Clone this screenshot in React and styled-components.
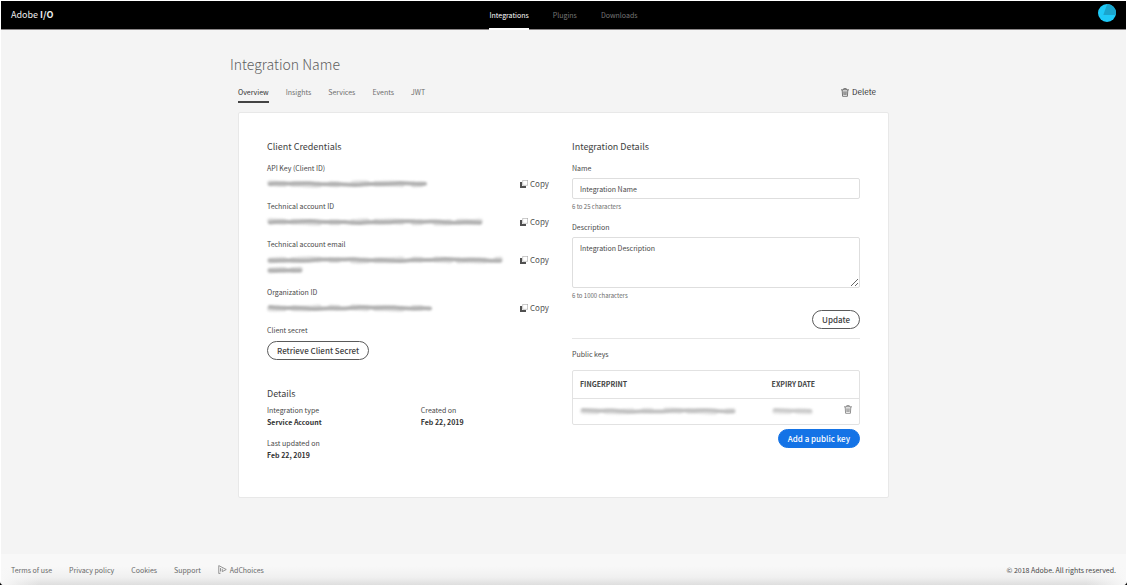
import React from "react";
import styled, { createGlobalStyle, css } from "styled-components";

const GlobalStyle = createGlobalStyle`
  *, *::before, *::after { box-sizing: border-box; }
  html { background: #000; }
  body {
    margin: 0;
    color: #484848;
    font-family: "Noto Sans CJK SC", "Open Sans", sans-serif;
    font-size: 7px;
    line-height: 12px;
  }
  button, input, textarea { font: inherit; color: inherit; margin: 0; }
  a { color: inherit; text-decoration: none; }
  h1, h2, p, dl, dd { margin: 0; font-weight: inherit; }
`;

const Page = styled.div`
  display: flex;
  flex-direction: column;
  min-height: 100vh;
  background: #f4f4f4;
  border: 1px solid #fff;
  border-bottom: 0;
  border-radius: 0 0 4px 4px;
  overflow: hidden;
`;

const TopBar = styled.header`
  display: grid;
  grid-template-columns: 1fr auto 1fr;
  align-items: center;
  height: 29px;
  padding: 0 10px;
  background: #000;
  border-bottom: 1px solid #8a8687;
`;

const Brand = styled.a`
  color: #eee;
  font-size: 9px;
  justify-self: start;
`;

const TopNav = styled.nav`
  display: flex;
  align-self: stretch;
  gap: 24px;
`;

const TopLink = styled.a`
  display: flex;
  align-items: center;
  padding-bottom: 1px;
  color: ${(p) => (p.$active ? "#fff" : "#777")};
  box-shadow: ${(p) => (p.$active ? "inset 0 -1px 0 #fff, 0 1px 0 #fff" : "none")};
`;

const AvatarButton = styled.button`
  justify-self: end;
  align-self: start;
  display: flex;
  margin-top: 3px;
  padding: 0;
  border: 0;
  background: none;
`;

const Main = styled.main`
  width: 100%;
  max-width: 667px;
  margin: 0 auto;
  padding: 22px 0 56px;
`;

const Title = styled.h1`
  color: #606060;
  font-size: 14px;
  line-height: 24px;
  font-weight: 300;
`;

const TabRow = styled.div`
  display: flex;
  align-items: flex-start;
  justify-content: space-between;
  margin: 10px 8px 0;
  padding-right: 13px;
`;

const Tabs = styled.nav`
  display: flex;
  gap: 17px;
`;

const Tab = styled.a`
  padding-bottom: 3px;
  border-bottom: 2px solid ${(p) => (p.$active ? "#444" : "transparent")};
  color: ${(p) => (p.$active ? "#333" : "#6e6e6e")};
`;

const PlainButton = styled.button`
  display: inline-flex;
  align-items: center;
  gap: ${(p) => (p.$strong ? 3 : 2)}px;
  padding: 0;
  border: 0;
  background: none;
  color: ${(p) => (p.$strong ? "#333" : "#555")};
  font-size: 8px;
  line-height: 12px;
`;

const Card = styled.section`
  display: grid;
  grid-template-columns: 1fr 288px;
  gap: 23px;
  margin: 9px 8px 0;
  padding: 26px 28px 36px;
  background: #fff;
  border: 1px solid #e8e8e8;
  border-radius: 2px;
`;

const Column = styled.div`
  min-width: 0;
`;

const Heading = styled.h2`
  margin-top: ${(p) => (p.$spaced ? 26 : 0)}px;
  margin-bottom: ${(p) => (p.$spaced ? 2 : 7)}px;
  color: #404040;
  font-size: 9px;
  line-height: 16px;
`;

const Credential = styled.div`
  margin-bottom: 10px;
`;

const CredentialValue = styled.div`
  display: flex;
  align-items: flex-start;
  justify-content: space-between;
  margin-top: 4px;
`;

const Lines = styled.div`
  display: flex;
  flex-direction: column;
  height: ${(p) => (p.$count > 1 ? 22 : 12)}px;

  svg + svg { margin-top: -2px; }
`;

const SmearSvg = styled.svg`
  display: block;
  flex: none;
  overflow: visible;
  filter: blur(1px);
`;

const PillButton = styled.button`
  height: 19px;
  padding: 0 9px;
  border: 1px solid #5a5a5a;
  border-radius: 10px;
  background: #fff;
  color: #404040;
  font-size: 8px;
  line-height: 12px;
  font-weight: 500;
  ${(p) =>
    p.$primary &&
    css`
      border-color: #1473e6;
      background: #1473e6;
      color: #fff;
    `}
`;

const SecretAction = styled.div`
  padding-top: 5px;
`;

const Facts = styled.dl`
  display: grid;
  grid-template-columns: 6fr 5fr;
  row-gap: 9px;
`;

const FactValue = styled.dd`
  color: #333;
  font-weight: 700;
`;

const Field = styled.div`
  display: flex;
  flex-direction: column;
  margin-bottom: 8px;
`;

const boxStyle = css`
  width: 100%;
  margin-top: 4px;
  padding: 3px 7px;
  border: 1px solid #dedede;
  border-radius: 2px;
  background: #fff;
  outline: none;
`;

const TextInput = styled.input`
  ${boxStyle}
  height: 21px;
`;

const TextArea = styled.textarea`
  ${boxStyle}
  display: block;
  height: 51px;
  padding-top: 4px;
  resize: vertical;
`;

const Hint = styled.p`
  margin-top: 2px;
  color: #6a6a6a;
  font-size: 6px;
`;

const Actions = styled.div`
  display: flex;
  justify-content: flex-end;
  padding-top: ${(p) => (p.$tight ? 4 : 0)}px;
`;

const PublicKeys = styled.section`
  margin-top: 9px;
  padding-top: 9px;
  border-top: 1px solid #e6e6e6;
`;

const TableFrame = styled.div`
  margin-top: 10px;
  border: 1px solid #e2e2e2;
  border-radius: 2px;
`;

const KeyTable = styled.table`
  width: 100%;
  border-collapse: collapse;
  table-layout: fixed;
`;

const Th = styled.th`
  width: ${(p) => p.$width || "auto"};
  height: 27px;
  padding: 0 7px;
  text-align: left;
  color: #444;
  font-weight: 700;
  border-bottom: 1px solid #e2e2e2;
`;

const Td = styled.td`
  height: 26px;
  padding: 0 7px;
  text-align: ${(p) => (p.$end ? "right" : "left")};
`;

const Footer = styled.footer`
  display: flex;
  align-items: center;
  justify-content: space-between;
  height: 31px;
  margin-top: auto;
  padding: 0 10px;
  color: #686868;
  background:
    linear-gradient(to right, #f8f8f8, transparent 40px, transparent calc(100% - 40px), #f8f8f8),
    linear-gradient(#f8f8f8 40%, #f0f0f0 75%, #dedede);
`;

const FooterLinks = styled.nav`
  display: flex;
  gap: 17px;
`;

const FooterLink = styled.a`
  display: inline-flex;
  align-items: center;
  gap: 3px;
`;

const Copyright = styled.span`
  color: #484848;
`;

function Avatar() {
  return (
    <svg width="18" height="18" viewBox="0 0 18 18" aria-hidden="true">
      <circle cx="9" cy="9" r="9" fill="#1fcaf8" />
      <path d="M5.3 11 9.2 0A9 9 0 0 1 17.8 11Z" fill="#1ba5cd" />
    </svg>
  );
}

function TrashIcon({ color = "#555" }) {
  return (
    <svg width="8" height="9" viewBox="0 0 16 18" fill="none" stroke={color} strokeWidth="1.6" aria-hidden="true">
      <path d="M0 3.6h16M5.5 3.6V1.2h5v2.4M2.4 4l.8 12.6h9.6L13.6 4M5.6 6.6l.3 7.4M8 6.6V14M10.4 6.6l-.3 7.4" />
    </svg>
  );
}

function CopyIcon() {
  return (
    <svg width="8" height="8" viewBox="0 0 16 16" aria-hidden="true">
      <path d="M0 4h4v8h8v4H0Z" fill="#505050" />
      <rect x="5.6" y="0.6" width="9.8" height="9.8" fill="#fff" stroke="#aaa" strokeWidth="1.2" />
    </svg>
  );
}

function AdChoicesIcon() {
  return (
    <svg width="9" height="9" viewBox="0 0 18 18" fill="none" stroke="#8a8a8a" strokeWidth="1.8" aria-hidden="true">
      <path d="M5 16.5 1.5 17V1.2L16.5 9 8.5 13.2V7.5" />
      <path d="M5 6v7" />
    </svg>
  );
}

/* Smudged stroke that hides a private value. */
function Smear({ width, tone = "#b2b2b2" }) {
  const wave = (phase, base) => {
    let d = "";
    for (let x = 3; x <= width - 2; x += 5) {
      const y = base + Math.sin(x / 17 + phase) * 0.6 + Math.sin(x / 5 + phase) * 0.3;
      d += `${d ? "L" : "M"}${x} ${y.toFixed(1)}`;
    }
    return d;
  };
  return (
    <SmearSvg width={width} height="12" role="img" aria-label="Hidden value" fill="none" stroke={tone} strokeLinecap="round">
      <path d={wave(width, 6)} strokeWidth="4" />
      <path d={wave(width + 2, 6)} strokeWidth="6" strokeDasharray="14 9 26 12 7 15" opacity="0.4" />
    </SmearSvg>
  );
}

const credentials = [
  { label: "API Key (Client ID)", lines: [160] },
  { label: "Technical account ID", lines: [216] },
  { label: "Technical account email", lines: [239, 38] },
  { label: "Organization ID", lines: [168] },
];

const facts = [
  ["Integration type", "Service Account"],
  ["Created on", "Feb 22, 2019"],
  ["Last updated on", "Feb 22, 2019"],
];

export default function App() {
  return (
    <>
      <GlobalStyle />
      <Page>
        <TopBar>
          <Brand href="#home">Adobe <strong>I/O</strong></Brand>
          <TopNav aria-label="Console">
            <TopLink href="#integrations" $active>Integrations</TopLink>
            <TopLink href="#plugins">Plugins</TopLink>
            <TopLink href="#downloads">Downloads</TopLink>
          </TopNav>
          <AvatarButton type="button" aria-label="Account"><Avatar /></AvatarButton>
        </TopBar>

        <Main>
          <Title>Integration Name</Title>
          <TabRow>
            <Tabs aria-label="Integration sections">
              {["Overview", "Insights", "Services", "Events", "JWT"].map((name, i) => (
                <Tab key={name} href={`#${name.toLowerCase()}`} $active={i === 0}>{name}</Tab>
              ))}
            </Tabs>
            <PlainButton type="button" $strong><TrashIcon />Delete</PlainButton>
          </TabRow>

          <Card>
            <Column>
              <Heading>Client Credentials</Heading>
              {credentials.map((c) => (
                <Credential key={c.label}>
                  <div>{c.label}</div>
                  <CredentialValue>
                    <Lines $count={c.lines.length}>
                      {c.lines.map((w) => <Smear key={w} width={w} />)}
                    </Lines>
                    <PlainButton type="button"><CopyIcon />Copy</PlainButton>
                  </CredentialValue>
                </Credential>
              ))}
              <div>Client secret</div>
              <SecretAction>
                <PillButton type="button">Retrieve Client Secret</PillButton>
              </SecretAction>

              <Heading $spaced>Details</Heading>
              <Facts>
                {facts.map(([term, value]) => (
                  <div key={term}>
                    <dt>{term}</dt>
                    <FactValue>{value}</FactValue>
                  </div>
                ))}
              </Facts>
            </Column>

            <Column>
              <Heading>Integration Details</Heading>
              <Field>
                <label htmlFor="name">Name</label>
                <TextInput id="name" type="text" defaultValue="Integration Name" />
                <Hint>6 to 25 characters</Hint>
              </Field>
              <Field>
                <label htmlFor="description">Description</label>
                <TextArea id="description" defaultValue="Integration Description" />
                <Hint>6 to 1000 characters</Hint>
              </Field>
              <Actions>
                <PillButton type="button">Update</PillButton>
              </Actions>

              <PublicKeys>
                <div>Public keys</div>
                <TableFrame>
                  <KeyTable>
                    <thead>
                      <tr>
                        <Th $width="67%">FINGERPRINT</Th>
                        <Th>EXPIRY DATE</Th>
                        <Th $width="10%" aria-label="Actions" />
                      </tr>
                    </thead>
                    <tbody>
                      <tr>
                        <Td><Smear width={155} tone="#c2c2c2" /></Td>
                        <Td><Smear width={42} tone="#cccccc" /></Td>
                        <Td $end>
                          <PlainButton type="button" aria-label="Delete key"><TrashIcon color="#777" /></PlainButton>
                        </Td>
                      </tr>
                    </tbody>
                  </KeyTable>
                </TableFrame>
                <Actions $tight>
                  <PillButton type="button" $primary>Add a public key</PillButton>
                </Actions>
              </PublicKeys>
            </Column>
          </Card>
        </Main>

        <Footer>
          <FooterLinks aria-label="Legal">
            <FooterLink href="#terms">Terms of use</FooterLink>
            <FooterLink href="#privacy">Privacy policy</FooterLink>
            <FooterLink href="#cookies">Cookies</FooterLink>
            <FooterLink href="#support">Support</FooterLink>
            <FooterLink href="#adchoices"><AdChoicesIcon />AdChoices</FooterLink>
          </FooterLinks>
          <Copyright>© 2018 Adobe. All rights reserved.</Copyright>
        </Footer>
      </Page>
    </>
  );
}
